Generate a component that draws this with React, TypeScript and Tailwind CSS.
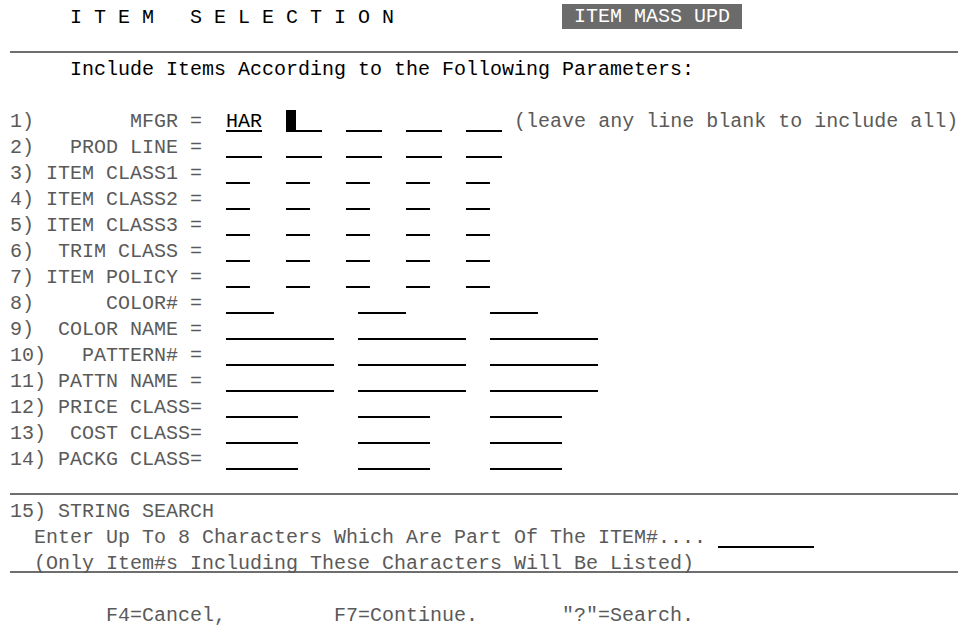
import React from "react";

interface Field {
  col: number;
  len: number;
  value?: string;
  cursor?: boolean;
}

const widths: Record<number, string> = {
  2: "w-[24px]",
  3: "w-[36px]",
  4: "w-[48px]",
  6: "w-[72px]",
  8: "w-[96px]",
  9: "w-[108px]",
};

const FieldBox = ({ f }: { f: Field }) => (
  <span
    className={`inline-flex align-top items-start h-[23px] border-b-2 border-black text-black ${widths[f.len]}`}
  >
    {f.cursor ? <span className="mt-[1px] w-[10px] h-[21px] bg-black" /> : f.value}
  </span>
);

// label covers columns 1..18, fields are placed by column
const Row = ({ label, fields, tail }: { label: string; fields: Field[]; tail?: string }) => {
  let pos = 19;
  return (
    <div className="h-[26px] pt-[2px] whitespace-pre text-[#5a5a5a]">
      {label}
      {fields.map((f, i) => {
        const gap = " ".repeat(f.col - pos);
        pos = f.col + f.len;
        return (
          <React.Fragment key={i}>
            {gap}
            <FieldBox f={f} />
          </React.Fragment>
        );
      })}
      {tail}
    </div>
  );
};

const five = (len: number): Field[] => [19, 24, 29, 34, 39].map((col) => ({ col, len }));
const three = (len: number): Field[] => [19, 30, 41].map((col) => ({ col, len }));

export default function App() {
  return (
    <div className="w-[971px] h-[629px] bg-white pt-[3px] pl-[10px] text-[20px] leading-[26px] font-['Liberation_Mono',monospace] overflow-hidden">
      <div className="h-[26px] pt-[2px] whitespace-pre text-black">
        {"     I T E M   S E L E C T I O N              "}
        <span className="inline-block align-top -mt-[1px] h-[25px] bg-[#6b6b6b] text-white">
          {" ITEM MASS UPD "}
        </span>
      </div>
      <div className="h-[24px] mb-[2px] w-[948px] border-b-2 border-[#6e6e6e]" />
      <div className="h-[26px] pt-[2px] whitespace-pre text-black">
        {"     Include Items According to the Following Parameters:"}
      </div>
      <div className="h-[26px]" />

      <Row
        label={"1)        MFGR =  "}
        fields={[
          { col: 19, len: 3, value: "HAR" },
          { col: 24, len: 3, cursor: true },
          { col: 29, len: 3 },
          { col: 34, len: 3 },
          { col: 39, len: 3 },
        ]}
        tail={" (leave any line blank to include all)"}
      />
      <Row label={"2)   PROD LINE =  "} fields={five(3)} />
      <Row label={"3) ITEM CLASS1 =  "} fields={five(2)} />
      <Row label={"4) ITEM CLASS2 =  "} fields={five(2)} />
      <Row label={"5) ITEM CLASS3 =  "} fields={five(2)} />
      <Row label={"6)  TRIM CLASS =  "} fields={five(2)} />
      <Row label={"7) ITEM POLICY =  "} fields={five(2)} />
      <Row label={"8)      COLOR# =  "} fields={three(4)} />
      <Row label={"9)  COLOR NAME =  "} fields={three(9)} />
      <Row label={"10)   PATTERN# =  "} fields={three(9)} />
      <Row label={"11) PATTN NAME =  "} fields={three(9)} />
      <Row label={"12) PRICE CLASS=  "} fields={three(6)} />
      <Row label={"13)  COST CLASS=  "} fields={three(6)} />
      <Row label={"14) PACKG CLASS=  "} fields={three(6)} />

      <div className="h-[24px] mb-[2px] w-[948px] border-b-2 border-[#6e6e6e]" />
      <div className="h-[26px] pt-[2px] whitespace-pre text-[#5a5a5a]">15) STRING SEARCH</div>
      <div className="h-[26px] pt-[2px] whitespace-pre text-[#5a5a5a]">
        {"  Enter Up To 8 Characters Which Are Part Of The ITEM#.... "}
        <FieldBox f={{ col: 60, len: 8 }} />
      </div>
      <div className="h-[24px] mb-[2px] pt-[2px] w-[948px] border-b-2 border-[#6e6e6e] whitespace-pre text-[#5a5a5a]">
        {"  (Only Item#s Including These Characters Will Be Listed)"}
      </div>
      <div className="h-[26px]" />
      <div className="h-[26px] pt-[2px] whitespace-pre text-[#5a5a5a]">
        {"        F4=Cancel,         F7=Continue.       \"?\"=Search."}
      </div>
    </div>
  );
}
